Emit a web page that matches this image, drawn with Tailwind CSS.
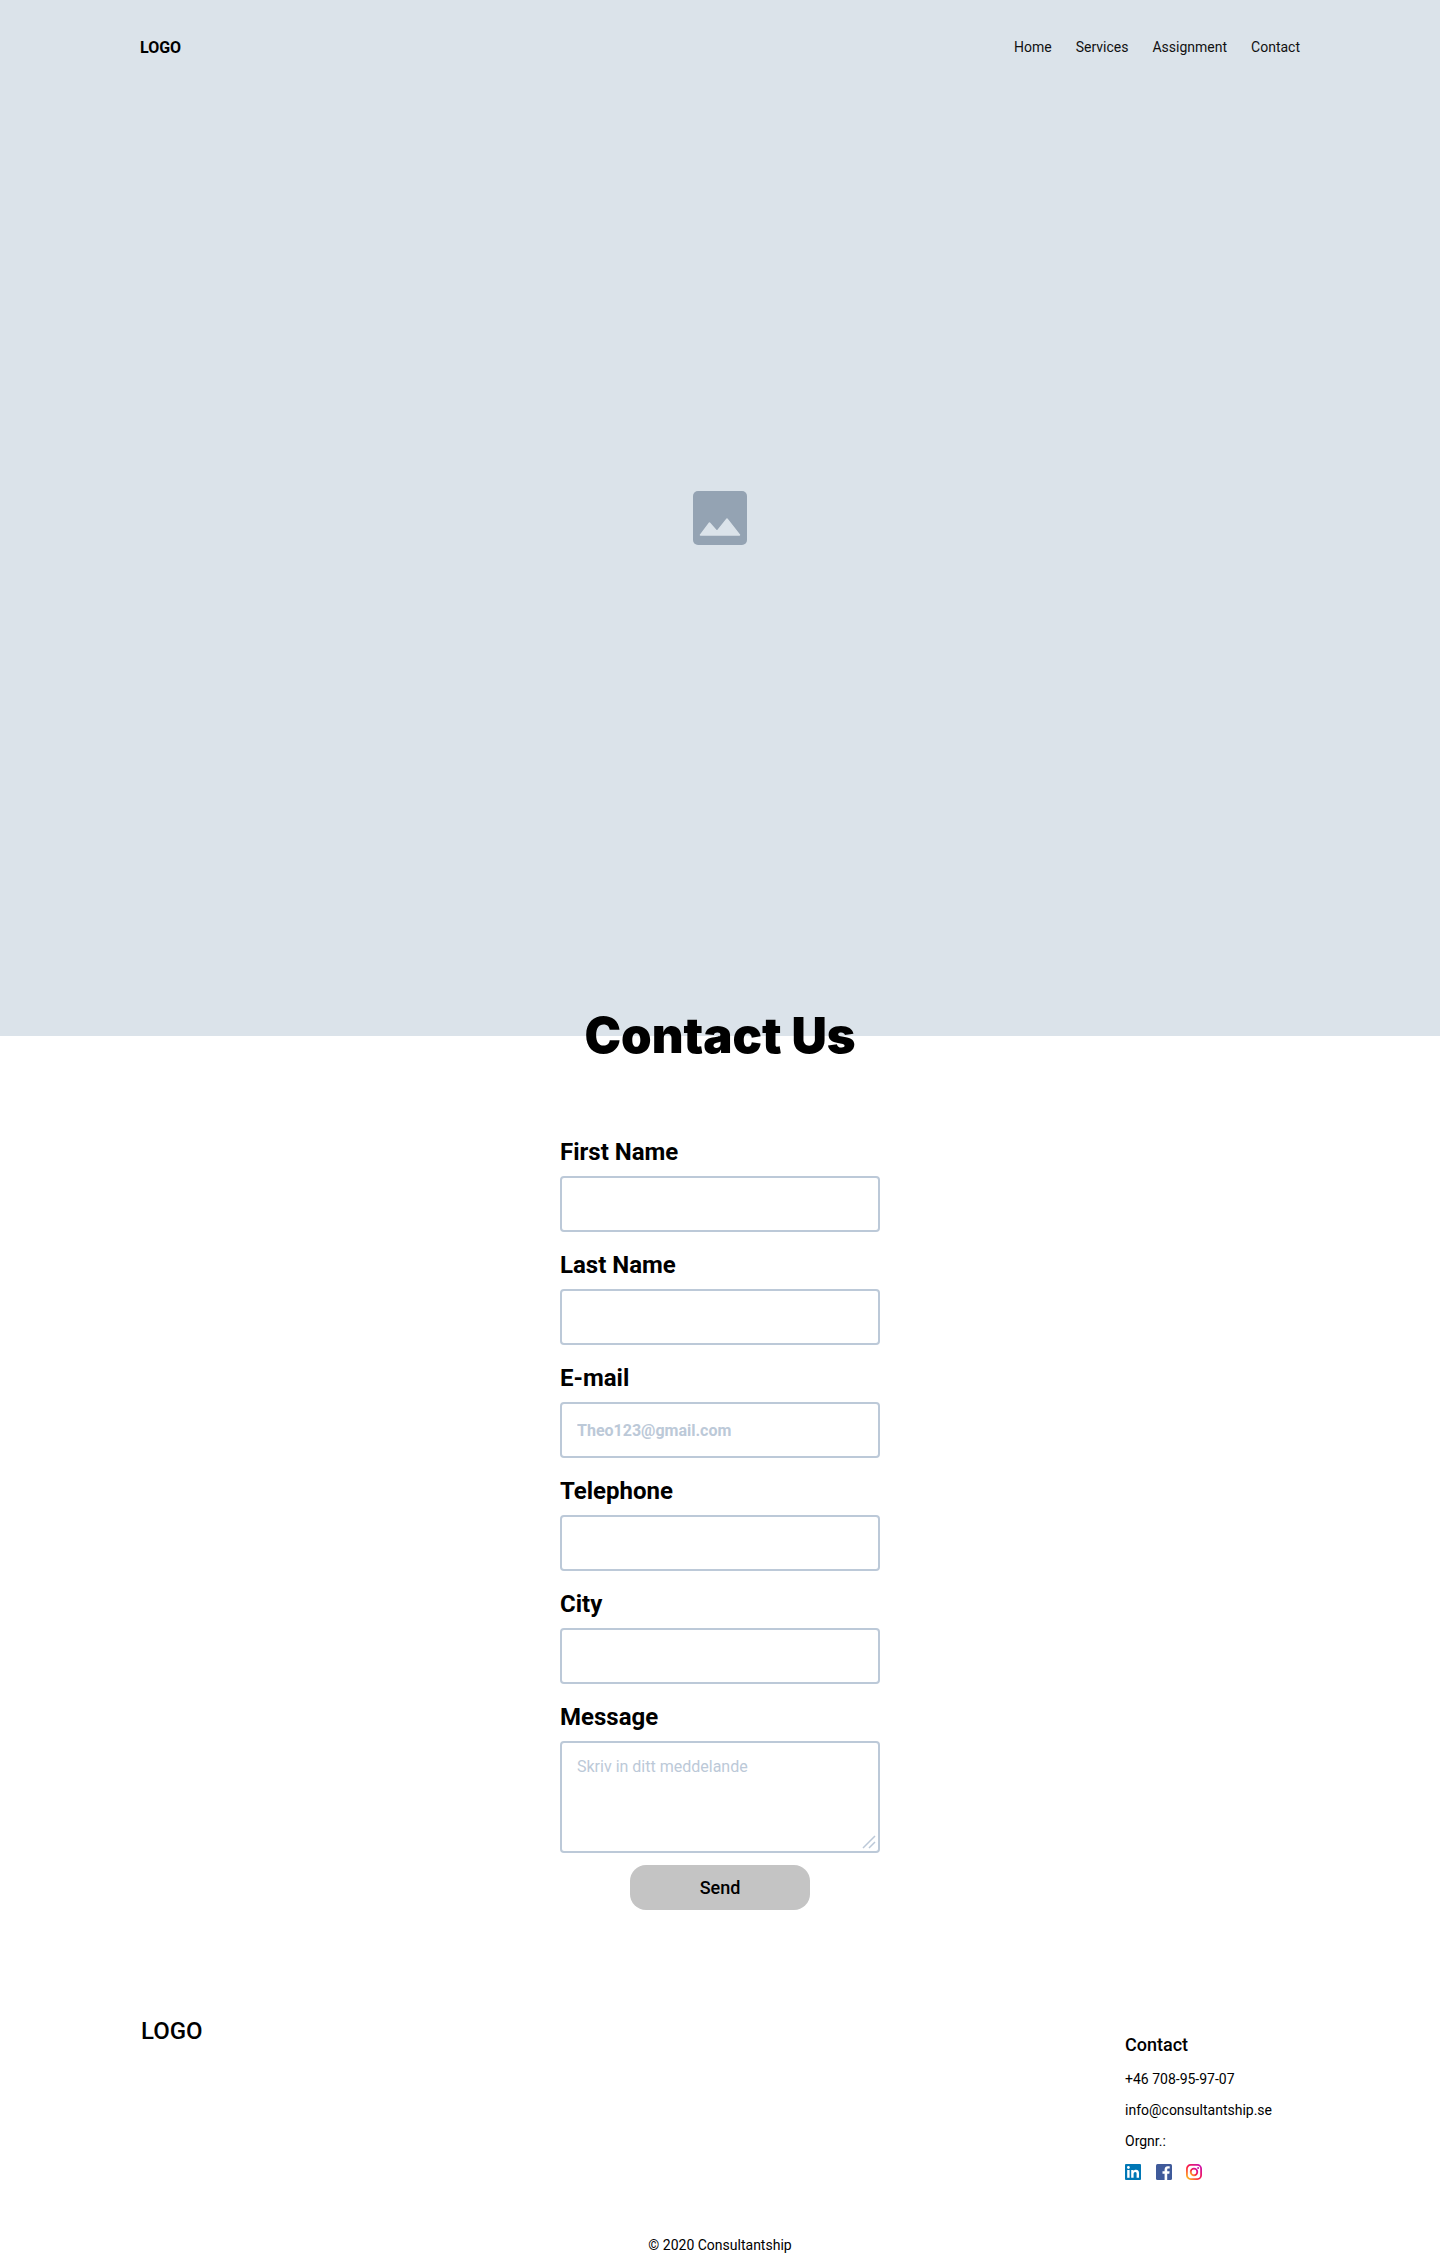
<!DOCTYPE html>
<html lang="en">
<head>
<meta charset="utf-8">
<title>Contact Us</title>
<script src="https://cdn.jsdelivr.net/npm/@tailwindcss/browser@4"></script>
</head>
<body class="bg-white text-black font-['Roboto',sans-serif]">
<div class="h-[2262px] overflow-hidden">
  <header class="relative h-[1036px] bg-[#dbe3ea]">
    <nav class="flex items-center justify-between px-[140px] h-[94px]">
      <a class="text-[16px] font-bold mt-[1px]">LOGO</a>
      <ul class="flex gap-6 text-[14px] text-[#111]">
        <li>Home</li><li>Services</li><li>Assignment</li><li>Contact</li>
      </ul>
    </nav>
    <div class="absolute left-[693px] top-[491px] w-[54px] h-[54px] rounded-[5px] bg-[#94a3b3]">
      <svg viewBox="0 0 54 54" class="w-full h-full"><path d="M7.500 44 L16.500 32 L24 40.500 L34 28 L46.500 44 Z" fill="#dbe3ea" stroke="#dbe3ea" stroke-width="1.500" stroke-linejoin="round"/></svg>
    </div>
  </header>
  <main class="flex flex-col items-center">
    <h1 class="-mt-[36px] h-[72px] leading-[72px] text-[49px] font-black font-['Inter',sans-serif] relative">Contact Us</h1>
    <form class="w-[320px] mt-[66px] flex flex-col">
      <label class="text-[24px] leading-[28px] font-bold block">First Name</label>
      <input class="mt-[10px] mb-[19px] w-full h-[56px] rounded-[4px] border-2 border-[#bcc9d8] px-[15px] text-[16px] outline-none bg-white">
      <label class="text-[24px] leading-[28px] font-bold block">Last Name</label>
      <input class="mt-[10px] mb-[19px] w-full h-[56px] rounded-[4px] border-2 border-[#bcc9d8] px-[15px] text-[16px] outline-none bg-white">
      <label class="text-[24px] leading-[28px] font-bold block">E-mail</label>
      <input placeholder="Theo123@gmail.com" class="mt-[10px] mb-[19px] w-full h-[56px] rounded-[4px] border-2 border-[#bcc9d8] px-[15px] text-[16px] font-bold outline-none bg-white placeholder:text-[#bcc9d8]">
      <label class="text-[24px] leading-[28px] font-bold block">Telephone</label>
      <input class="mt-[10px] mb-[19px] w-full h-[56px] rounded-[4px] border-2 border-[#bcc9d8] px-[15px] text-[16px] outline-none bg-white">
      <label class="text-[24px] leading-[28px] font-bold block">City</label>
      <input class="mt-[10px] mb-[19px] w-full h-[56px] rounded-[4px] border-2 border-[#bcc9d8] px-[15px] text-[16px] outline-none bg-white">
      <label class="text-[24px] leading-[28px] font-bold block">Message</label>
      <div class="relative mt-[10px]">
        <textarea placeholder="Skriv in ditt meddelande" class="w-full h-[112px] rounded-[4px] border-2 border-[#bcc9d8] px-[15px] py-[12px] text-[16px] outline-none bg-white placeholder:text-[#bcc9d8] block resize-none"></textarea>
        <svg viewBox="0 0 14 14" class="absolute right-[4px] bottom-[4px] w-[14px] h-[14px]" fill="none" stroke="#bcc9d8" stroke-width="1.500"><path d="M1 13 L13 1 M7 13 L13 7"/></svg>
      </div>
      <button type="button" class="self-center mt-[12px] w-[180px] h-[45px] rounded-[16px] bg-[#c4c4c4] text-[18px] font-medium">Send</button>
    </form>
  </main>
  <footer class="mt-[107px] px-[141px] flex justify-between">
    <div class="text-[24px] leading-[28px] font-medium">LOGO</div>
    <div class="w-[174px] pt-[16px] text-[14px]">
      <h2 class="text-[18px] leading-[24px] font-medium">Contact</h2>
      <p class="mt-[12px] leading-[20px]">+46 708-95-97-07</p>
      <p class="mt-[11px] leading-[20px]">info@consultantship.se</p>
      <p class="mt-[11px] leading-[20px]">Orgnr.:</p>
      <div class="mt-[13px] flex gap-[15px]">
        <svg viewBox="0 0 16 16" class="w-4 h-4"><rect width="16" height="16" rx="1" fill="#0077b5"/><rect x="2.200" y="6" width="2.400" height="7.800" fill="#fff"/><circle cx="3.400" cy="3.500" r="1.400" fill="#fff"/><path d="M6.200 6h2.300v1.100c.5-.8 1.400-1.300 2.500-1.300 2.200 0 3 1.300 3 3.500v4.500h-2.400V9.800c0-1-.3-1.800-1.300-1.800-1.100 0-1.700.8-1.700 1.900v3.900H6.200z" fill="#fff"/></svg>
        <svg viewBox="0 0 16 16" class="w-4 h-4"><rect width="16" height="16" rx="1.500" fill="#3f5a9a"/><path d="M11.200 16V9.800h2.100l.3-2.500h-2.400V5.800c0-.7.200-1.200 1.200-1.200h1.300V2.300c-.3 0-1-.1-1.900-.1-1.900 0-3.200 1.200-3.200 3.300v1.800H6.500v2.500h2.100V16z" fill="#fff"/></svg>
        <svg viewBox="0 0 16 16" class="w-4 h-4 -ml-[1px]" fill="none"><defs><linearGradient id="ig" x1="0" y1="1" x2="1" y2="0"><stop offset="0" stop-color="#ffc81e"/><stop offset="0.450" stop-color="#fb1f45"/><stop offset="1" stop-color="#c80fb4"/></linearGradient></defs><rect x="0.900" y="0.900" width="14.200" height="14.200" rx="3.800" stroke="url(#ig)" stroke-width="1.800"/><circle cx="8" cy="8" r="3.300" stroke="url(#ig)" stroke-width="1.800"/><circle cx="12.100" cy="3.900" r="1" fill="#c9179e"/></svg>
      </div>
    </div>
  </footer>
  <p class="mt-[55px] text-center text-[14px] leading-[20px]">© 2020 Consultantship</p>
</div>
</body>
</html>
